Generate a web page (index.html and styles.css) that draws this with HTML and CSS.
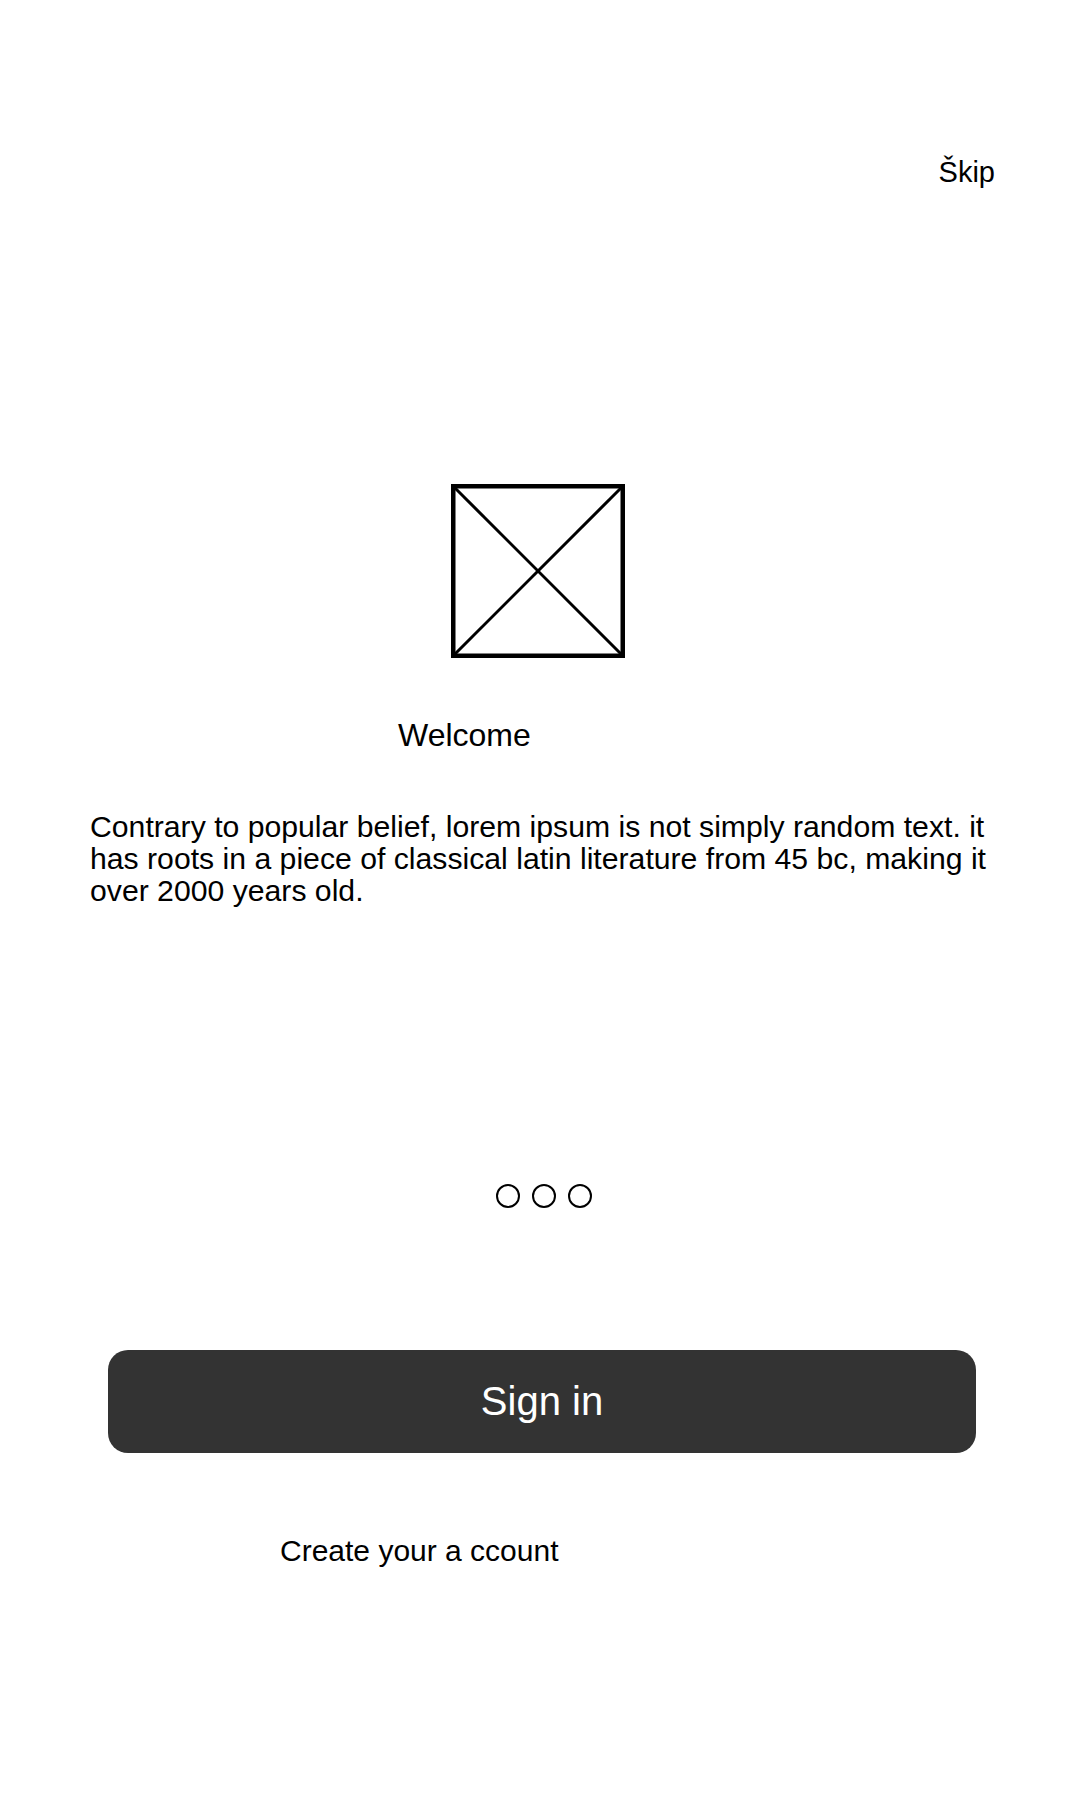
FILE: index.html
```html
<!DOCTYPE html>
<html lang="en">
<head>
<meta charset="utf-8">
<title>Welcome</title>
<link rel="stylesheet" href="styles.css">
</head>
<body>
<main class="screen">
  <div class="topbar"><a class="skip" href="#">Škip</a></div>
  <div class="hero">
    <svg class="placeholder" width="174" height="174" viewBox="0 0 174 174" aria-hidden="true">
      <rect x="2.25" y="2.25" width="169.5" height="169.5" fill="none" stroke="#000" stroke-width="4.5"/>
      <line x1="3" y1="3" x2="171" y2="171" stroke="#000" stroke-width="3"/>
      <line x1="171" y1="3" x2="3" y2="171" stroke="#000" stroke-width="3"/>
    </svg>
  </div>
  <h1 class="title">Welcome</h1>
  <p class="desc">Contrary to popular belief, lorem ipsum is not simply random text. it has roots in a piece of classical latin literature from 45 bc, making it over 2000 years old.</p>
  <div class="dots">
    <span class="dot"></span><span class="dot"></span><span class="dot"></span>
  </div>
  <button class="signin">Sign in</button>
  <a class="create" href="#">Create your a ccount</a>
</main>
</body>
</html>
```

FILE: styles.css
```css
html, body {
  margin: 0;
  padding: 0;
  background: #fff;
}
body {
  font-family: "Liberation Sans", Arial, sans-serif;
  color: #000;
}
.screen {
  width: 1080px;
  height: 1800px;
  display: flex;
  flex-direction: column;
}
.topbar {
  display: flex;
  justify-content: flex-end;
  padding: 155px 85px 0 0;
}
.skip {
  font-size: 29px;
  line-height: 34px;
  color: #000;
  text-decoration: none;
}
.hero {
  margin-top: 295px;
  padding-left: 451px;
  display: flex;
}
.placeholder {
  display: block;
}
.title {
  margin: 58px 0 0 398px;
  font-size: 32px;
  line-height: 38px;
  font-weight: normal;
}
.desc {
  margin: 57px 84px 0 90px;
  font-size: 30.2px;
  line-height: 32px;
}
.dots {
  margin-top: 277px;
  padding-left: 496px;
  display: flex;
  gap: 12px;
}
.dot {
  width: 24px;
  height: 24px;
  box-sizing: border-box;
  border: 2.5px solid #000;
  border-radius: 50%;
}
.signin {
  margin: 142px 0 0 108px;
  width: 868px;
  height: 103px;
  border: none;
  border-radius: 20px;
  background: #333333;
  color: #fff;
  font-family: "Liberation Sans", Arial, sans-serif;
  font-size: 40px;
  padding: 0;
}
.create {
  margin: 81px 0 0 280px;
  font-size: 30px;
  line-height: 34px;
  color: #000;
  text-decoration: none;
  align-self: flex-start;
}
```
